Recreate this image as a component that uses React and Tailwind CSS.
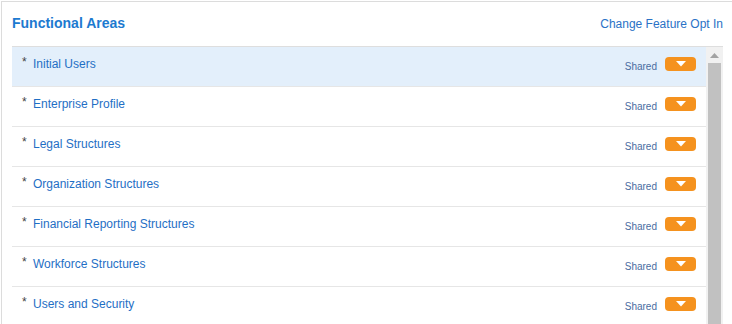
import React from 'react';

const areas = [
  'Initial Users',
  'Enterprise Profile',
  'Legal Structures',
  'Organization Structures',
  'Financial Reporting Structures',
  'Workforce Structures',
  'Users and Security',
];

const AreaRow = ({ name, selected }) => (
  <div className={`h-[40px] border-b border-[#e6e6e6] flex items-start pl-[10px] pr-[10px] ${selected ? 'bg-[#e3effb]' : 'bg-white'}`}>
    <div className="flex items-start pt-[8px] flex-1">
      <span className="text-[12px] leading-[14px] text-[#444] w-[11px]">*</span>
      <a href="#" className="text-[12px] leading-[16px] text-[#1f6fc5] pt-[1px]">{name}</a>
    </div>
    <div className="flex items-start gap-[8px] pt-[10px]">
      <span className="text-[10px] leading-[14px] text-[#4a6c9f] pt-[3px]">Shared</span>
      <button type="button" className="w-[31px] h-[14px] rounded-[4px] bg-[#f5921e] flex items-center justify-center">
        <svg width="10" height="6" viewBox="0 0 10 6">
          <path d="M0 0 L10 0 L5 5.5 Z" fill="#ffffff" />
        </svg>
      </button>
    </div>
  </div>
);

export default function App() {
  return (
    <div className="w-[732px] h-[324px] overflow-hidden bg-white pl-px pt-px" style={{ fontFamily: '"Liberation Sans", Arial, sans-serif' }}>
      <div className="h-full border-l border-t border-[#dcdcdc] pl-[10px] pr-[9px]">
        <header className="h-[44px] pt-[12px] flex items-baseline justify-between">
          <h2 className="text-[14px] leading-[18px] font-bold text-[#1d7ad0]">Functional Areas</h2>
          <a href="#" className="text-[12px] leading-[16px] text-[#2a72c6]">Change Feature Opt In</a>
        </header>

        <div className="h-[278px] border-t border-[#dedede] flex">
          <div className="flex-1">
            {areas.map((a, i) => (
              <AreaRow key={a} name={a} selected={i === 0} />
            ))}
          </div>
          <div className="w-[17px] bg-[#f1f1f1] flex flex-col items-center pt-[6px]">
            <svg width="9" height="5" viewBox="0 0 9 5">
              <path d="M4.5 0 L9 5 L0 5 Z" fill="#a3a3a3" />
            </svg>
            <div className="w-[13px] flex-1 bg-[#c1c1c1] mt-[5px]" />
          </div>
        </div>
      </div>
    </div>
  );
}
